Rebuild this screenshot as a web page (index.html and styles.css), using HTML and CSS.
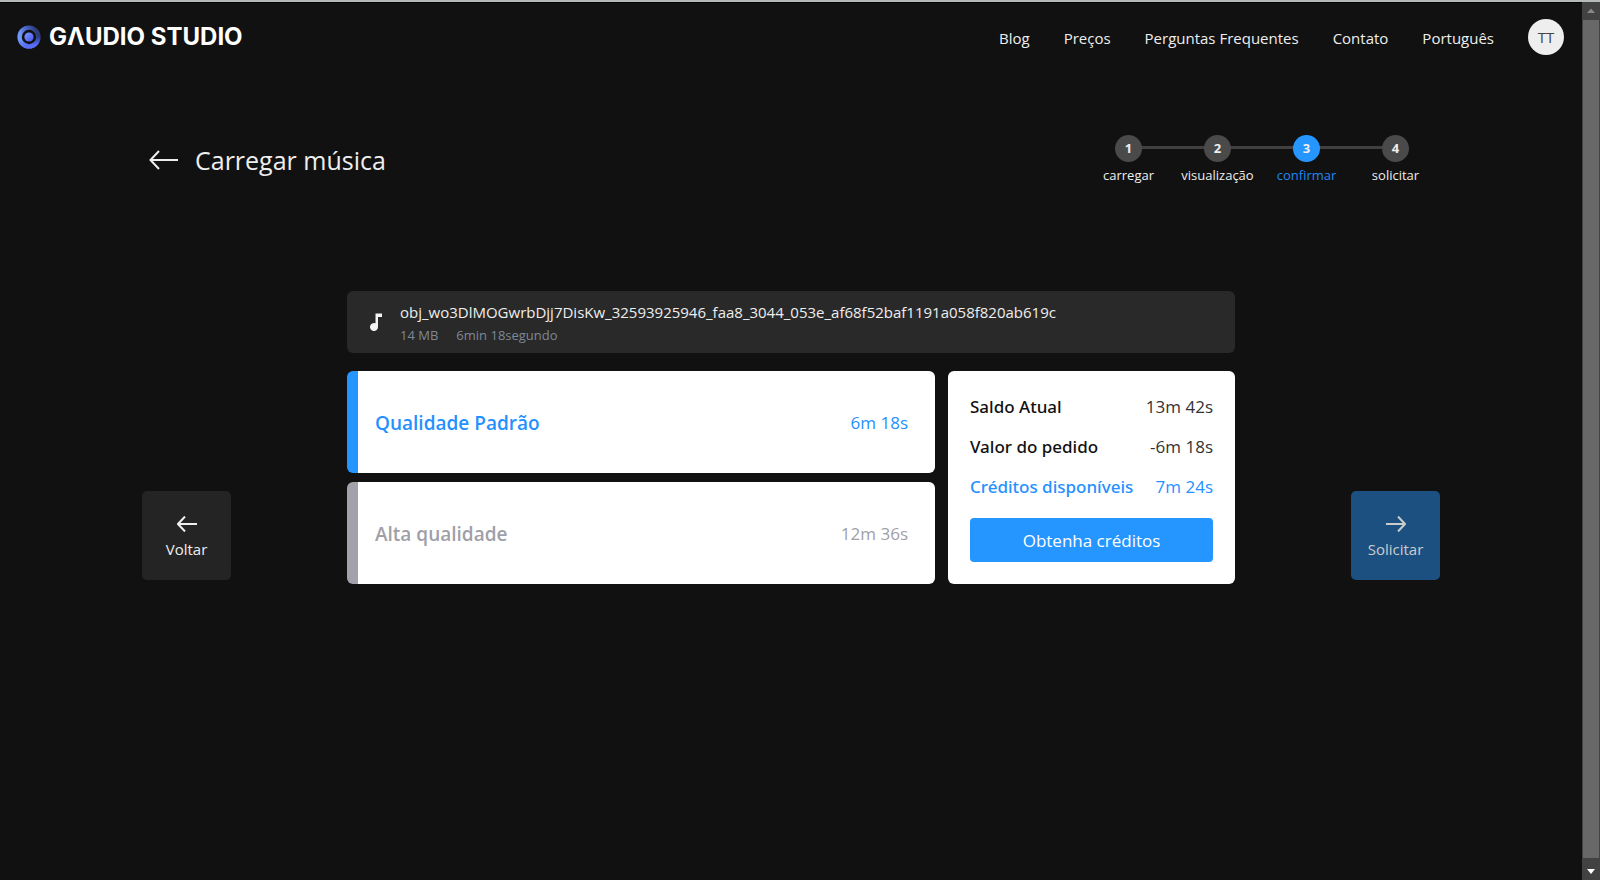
FILE: index.html
```html
<!DOCTYPE html>
<html lang="pt">
<head>
<meta charset="utf-8">
<title>Gaudio Studio</title>
<link rel="stylesheet" href="styles.css">
</head>
<body>
<div class="window">
  <div class="app">
    <header class="header">
      <a class="brand" href="#">
        <svg class="brand-mark" viewBox="0 0 24 24" aria-hidden="true">
          <defs>
            <linearGradient id="ring" x1="0.1" y1="0.6" x2="0.95" y2="0.3">
              <stop offset="0" stop-color="#6f98fb"/>
              <stop offset="0.45" stop-color="#4a66c8"/>
              <stop offset="1" stop-color="#2c3a78"/>
            </linearGradient>
            <linearGradient id="glow" x1="0.3" y1="0" x2="0.5" y2="1">
              <stop offset="0.6" stop-color="#4a5cf0" stop-opacity="0"/>
              <stop offset="1" stop-color="#5a6cfa"/>
            </linearGradient>
            <linearGradient id="core" x1="0" y1="0" x2="1" y2="1">
              <stop offset="0" stop-color="#7f9cff"/>
              <stop offset="1" stop-color="#4450ee"/>
            </linearGradient>
          </defs>
          <circle cx="12" cy="12" r="9.4" fill="none" stroke="url(#ring)" stroke-width="4.4"/>
          <circle cx="12" cy="12" r="9.4" fill="none" stroke="url(#glow)" stroke-width="4.4"/>
          <circle cx="12" cy="12" r="4.6" fill="url(#core)"/>
        </svg>
        <span class="brand-name">GΛUDIO STUDIO</span>
      </a>
      <nav class="nav">
        <a href="#">Blog</a>
        <a href="#">Preços</a>
        <a href="#">Perguntas Frequentes</a>
        <a href="#">Contato</a>
        <a href="#">Português</a>
        <button class="avatar" type="button">TT</button>
      </nav>
    </header>

    <main class="main">
      <div class="top">
        <div class="title">
          <a class="title-back" href="#" aria-label="Voltar">
            <svg viewBox="0 0 30 20" width="30" height="20"><path d="M29 10H1.500M10 1L1.500 10L10 19"/></svg>
          </a>
          <h1>Carregar música</h1>
        </div>
        <ol class="steps">
          <li><span class="dot">1</span><span>carregar</span></li>
          <li><span class="dot">2</span><span>visualização</span></li>
          <li class="current" aria-current="step"><span class="dot">3</span><span>confirmar</span></li>
          <li><span class="dot">4</span><span>solicitar</span></li>
        </ol>
      </div>

      <div class="work">
        <button class="tile" type="button">
          <svg viewBox="0 0 20 16" width="20" height="16"><path d="M20 8H1M8 0.500L1 8L8 15.500"/></svg>
          <span>Voltar</span>
        </button>

        <div class="center">
          <section class="file">
            <svg class="note" viewBox="0 0 12 18" width="12" height="18" aria-hidden="true"><path d="M5.500 0.500H12V4H8V14A4 4 0 1 1 5.500 10.300Z"/></svg>
            <div class="file-text">
              <p class="file-name">obj_wo3DlMOGwrbDjj7DisKw_32593925946_faa8_3044_053e_af68f52baf1191a058f820ab619c</p>
              <p class="file-meta"><span>14 MB</span><span>6min 18segundo</span></p>
            </div>
          </section>

          <div class="panels">
            <div class="options">
              <button class="option selected" type="button"><span class="option-name">Qualidade Padrão</span><span class="option-time">6m 18s</span></button>
              <button class="option" type="button"><span class="option-name">Alta qualidade</span><span class="option-time">12m 36s</span></button>
            </div>
            <section class="summary">
              <dl>
                <div class="line"><dt>Saldo Atual</dt><dd>13m 42s</dd></div>
                <div class="line"><dt>Valor do pedido</dt><dd>-6m 18s</dd></div>
                <div class="line total"><dt>Créditos disponíveis</dt><dd>7m 24s</dd></div>
              </dl>
              <button class="credits" type="button">Obtenha créditos</button>
            </section>
          </div>
        </div>

        <button class="tile primary" type="button">
          <svg viewBox="0 0 20 16" width="20" height="16"><path d="M0 8H19M12 0.500L19 8L12 15.500"/></svg>
          <span>Solicitar</span>
        </button>
      </div>
    </main>
  </div>

  <div class="scrollbar" aria-hidden="true">
    <svg class="up" viewBox="0 0 18 18" width="18" height="18"><path d="M5 11L9 6.500L13 11Z"/></svg>
    <div class="thumb"></div>
    <svg class="down" viewBox="0 0 18 22" width="18" height="22"><path d="M5 11L9 16L13 11Z"/></svg>
  </div>
</div>
</body>
</html>
```
FILE: styles.css
```css
* {
  box-sizing: border-box;
}

body {
  margin: 0;
  background: #111111;
  color: #eeeeee;
  font-family: "Open Sans", "Noto Sans", sans-serif;
  font-size: 15px;
}

h1, p, ol, dl, dd {
  margin: 0;
  padding: 0;
  font-weight: 400;
}

a {
  color: inherit;
  text-decoration: none;
}

button {
  padding: 0;
  border: 0;
  color: inherit;
  font: inherit;
  cursor: pointer;
}

.window {
  display: flex;
  min-height: 100vh;
  border-top: 2px solid #b7baba;
}

.app {
  flex: 1;
  min-width: 0;
  border-top: 1px solid #000000;
}

.header {
  display: flex;
  align-items: center;
  justify-content: space-between;
  padding: 16px 18px 16px 17px;
}

.brand {
  display: flex;
  align-items: center;
  gap: 8px;
}

.brand-mark {
  width: 24px;
  height: 24px;
}

.brand-name {
  color: #ffffff;
  font-family: Inter, sans-serif;
  font-size: 24px;
  font-weight: 700;
  line-height: 24px;
}

.nav {
  display: flex;
  align-items: center;
  gap: 34px;
}

.nav a {
  padding-top: 2px;
}

.avatar {
  width: 36px;
  height: 36px;
  border-radius: 50%;
  background: #eeeeee;
  color: #444444;
}

.main {
  max-width: 1298px;
  margin: 0 auto;
  padding-top: 64px;
}

.top {
  display: flex;
  justify-content: space-between;
  align-items: center;
  padding-left: 7px;
}

.title {
  display: flex;
  align-items: center;
  gap: 16px;
}

.title-back {
  display: flex;
}

.title h1 {
  font-size: 25px;
  line-height: 36px;
}

svg path {
  fill: none;
  stroke: #eeeeee;
  stroke-width: 2;
}

.steps {
  display: grid;
  grid-template-columns: repeat(4, 89px);
  list-style: none;
  font-size: 13px;
  line-height: 18px;
}

.steps li {
  position: relative;
  display: flex;
  flex-direction: column;
  align-items: center;
  gap: 4px;
}

.steps li + li::before {
  content: "";
  position: absolute;
  top: 11px;
  right: 50%;
  width: 100%;
  height: 3px;
  background: #404040;
}

.dot {
  position: relative;
  z-index: 1;
  width: 27px;
  height: 27px;
  border-radius: 50%;
  background: #4a4a4a;
  font-weight: 700;
  line-height: 27px;
  text-align: center;
}

.steps .current {
  color: #2088f4;
}

.current .dot {
  background: #2596ff;
  color: #eeeeee;
}

.work {
  display: flex;
  align-items: flex-end;
  justify-content: space-between;
  margin-top: 107px;
}

.tile {
  display: flex;
  flex-direction: column;
  align-items: center;
  justify-content: center;
  gap: 7px;
  width: 89px;
  height: 89px;
  margin-bottom: 4px;
  padding-top: 4px;
  border-radius: 5px;
  background: #242424;
  line-height: 20px;
}

.tile.primary {
  background: #1c5080;
  color: #cccccc;
}

.primary path {
  stroke: #cccccc;
}

.center {
  flex: 0 1 888px;
}

.file {
  display: flex;
  align-items: center;
  gap: 18px;
  padding: 9px 23px;
  border-radius: 6px;
  background: #292929;
}

.note {
  flex: none;
}

.note path {
  fill: #f4f4f4;
  stroke: none;
}

.file-name {
  line-height: 24px;
}

.file-meta {
  display: flex;
  gap: 18px;
  margin-top: 2px;
  color: #7d8896;
  font-size: 13px;
  line-height: 18px;
}

.panels {
  display: grid;
  grid-template-columns: 588fr 287fr;
  gap: 13px;
  margin-top: 18px;
}

.options {
  display: grid;
  gap: 9px;
}

.option {
  display: flex;
  align-items: center;
  justify-content: space-between;
  padding: 1px 27px 0 17px;
  border-left: 11px solid #a3a1aa;
  border-radius: 6px;
  background: #ffffff;
  color: #a09fa8;
}

.option.selected {
  border-color: #2596ff;
  color: #2590ff;
}

.option-name {
  font-size: 19px;
  font-weight: 600;
}

.option-time {
  font-size: 17px;
}

.summary {
  padding: 16px 22px 22px;
  border-radius: 6px;
  background: #ffffff;
  color: #111111;
  font-size: 17px;
}

.line {
  display: flex;
  justify-content: space-between;
  line-height: 40px;
}

.line dt {
  font-family: "Noto Sans", "Open Sans", sans-serif;
  font-weight: 500;
}

.line dd {
  color: #333333;
}

.line.total,
.line.total dd {
  color: #2590ff;
}

.credits {
  width: 100%;
  height: 44px;
  margin-top: 11px;
  border-radius: 4px;
  background: #2596ff;
  color: #ffffff;
}

.scrollbar {
  display: flex;
  flex: none;
  flex-direction: column;
  width: 18px;
  background: #424242;
}

.thumb {
  flex: 1;
  margin: 0 1px;
  background: #686868;
}

.scrollbar path {
  fill: #888888;
  stroke: none;
}

.scrollbar .down path {
  fill: #ffffff;
}
```
